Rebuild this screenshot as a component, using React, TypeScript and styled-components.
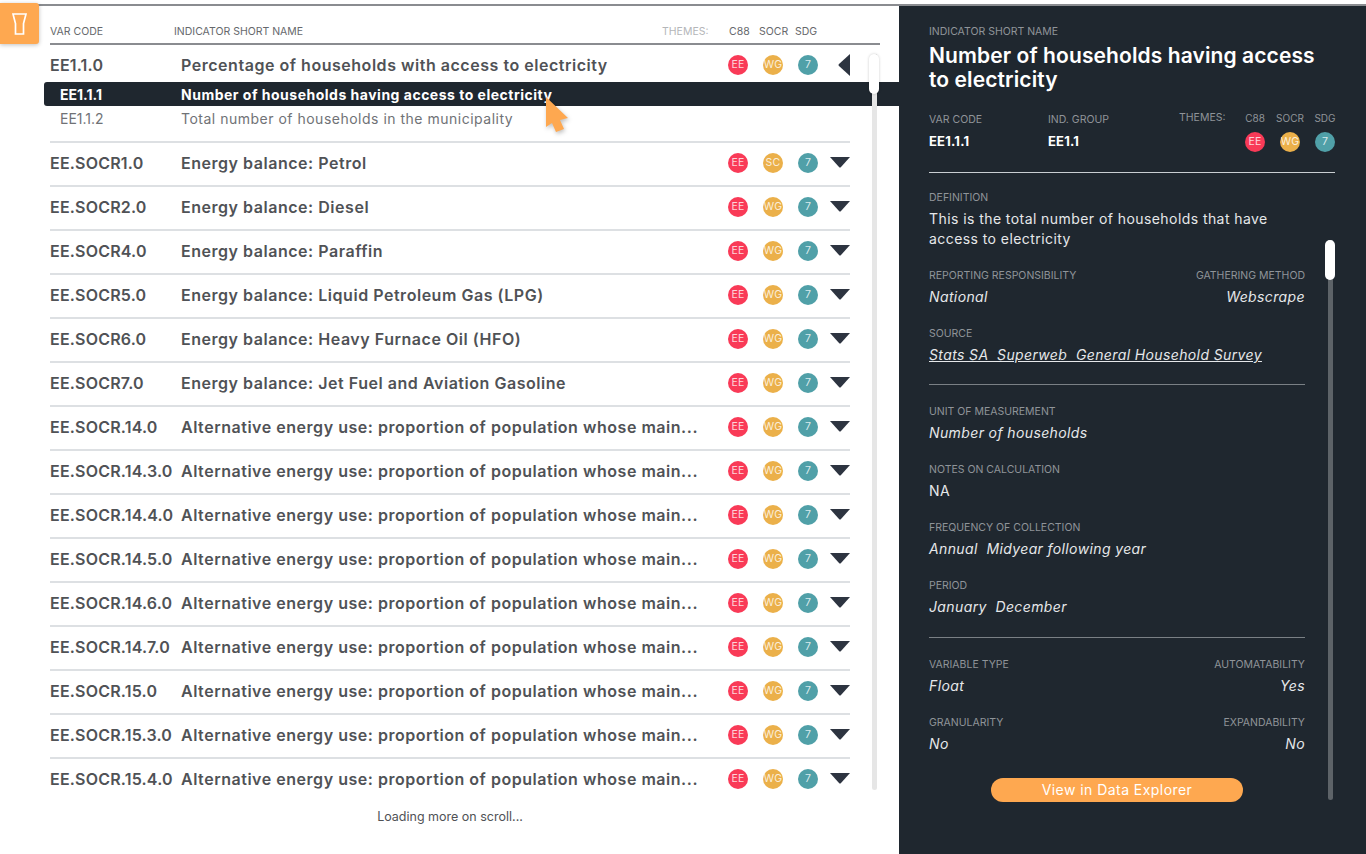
import React from "react";
import styled, { createGlobalStyle } from "styled-components";

const Global = createGlobalStyle`
  html, body { margin: 0; padding: 0; background: #fff; }
  body { font-family: Inter, "Liberation Sans", sans-serif; }
  * { box-sizing: border-box; }
`;

const Page = styled.div`
  position: relative;
  width: 1366px;
  height: 854px;
  padding-top: 4px;
  overflow: hidden;
`;

const Frame = styled.div`
  height: 850px;
  border-top: 2px solid #8a8c90;
  display: flex;
`;

const FilterButton = styled.button`
  position: absolute;
  left: 0;
  top: 3px;
  width: 39px;
  height: 41px;
  border: 0;
  padding: 0;
  border-radius: 0 3px 3px 0;
  background: #fea850;
  box-shadow: 0 1px 4px rgba(0, 0, 0, 0.25);
  display: flex;
  align-items: center;
  justify-content: center;
`;

const Left = styled.section`
  position: relative;
  width: 899px;
  flex: none;
  padding: 19px 0 0 50px;
`;

const HeadRow = styled.div`
  width: 830px;
  height: 20px;
  border-bottom: 2px solid #8a8c90;
  display: grid;
  grid-template-columns: 124px 488px 67px 30px 36px 1fr;
  align-items: start;
`;

const HeadCell = styled.span<{ $muted?: boolean }>`
  font-size: 10.5px;
  line-height: 14px;
  color: ${(p) => (p.$muted ? "#b4b6b9" : "#66686c")};
  white-space: nowrap;
`;

const List = styled.div`
  width: 800px;
`;

const Row = styled.div`
  height: 44px;
  border-bottom: 2px solid #dde0e3;
  display: flex;
  align-items: flex-start;
  padding-top: 10px;
`;

const OpenGroup = styled.div`
  height: 98px;
  border-bottom: 2px solid #dde0e3;
`;

const OpenHead = styled.div`
  height: 37px;
  display: flex;
  align-items: flex-start;
  padding-top: 10px;
`;

const Code = styled.span`
  width: 131px;
  flex: none;
  font-size: 16px;
  line-height: 20px;
  font-weight: 600;
  color: #505256;
  white-space: nowrap;
  letter-spacing: 0.2px;
`;

const Name = styled.span`
  width: 517px;
  flex: none;
  font-size: 16px;
  line-height: 20px;
  font-weight: 600;
  color: #505256;
  white-space: nowrap;
  letter-spacing: 0.53px;
`;

const Badges = styled.div`
  display: flex;
  gap: 15px;
  margin-left: 30px;
  flex: none;
`;

const Badge = styled.span<{ $bg: string }>`
  width: 20px;
  height: 20px;
  border-radius: 50%;
  background: ${(p) => p.$bg};
  color: rgba(255, 255, 255, 0.8);
  font-size: 10.5px;
  line-height: 20px;
  letter-spacing: 0.2px;
  text-align: center;
  flex: none;
`;

const CaretSlot = styled.div`
  width: 20px;
  margin-left: 12px;
  height: 20px;
  flex: none;
  display: flex;
  justify-content: flex-end;
`;

const SelectedRow = styled.div`
  width: 855px;
  margin-left: -6px;
  height: 24px;
  padding-top: 1px;
  border-radius: 3px 0 0 3px;
  background: #1f272f;
  display: flex;
  align-items: center;
  padding-left: 16px;
  color: #fff;
  font-size: 14px;
  font-weight: 700;
`;

const SubCode = styled.span`
  width: 121px;
  flex: none;
`;

const SubName = styled.span`
  white-space: nowrap;
  letter-spacing: 0.5px;
`;

const PlainSub = styled.div`
  height: 24px;
  display: flex;
  align-items: center;
  padding-left: 10px;
  color: #707276;
  font-size: 14px;
  font-weight: 400;
`;

const Track = styled.div<{ $left: number; $top: number; $height: number; $bg: string }>`
  position: absolute;
  left: ${(p) => p.$left}px;
  top: ${(p) => p.$top}px;
  width: 5px;
  height: ${(p) => p.$height}px;
  background: ${(p) => p.$bg};
  border-radius: 0 0 3px 3px;
`;

const Thumb = styled.div<{ $shadow?: boolean }>`
  position: absolute;
  left: -3px;
  top: 0;
  width: 10px;
  height: 40px;
  border-radius: 5px;
  background: #fff;
  box-shadow: ${(p) => (p.$shadow ? "0 0 3px rgba(0,0,0,.2)" : "none")};
`;

const Loading = styled.div`
  width: 800px;
  margin-top: 13px;
  text-align: center;
  font-size: 12.5px;
  line-height: 16px;
  color: #505256;
`;

const Cursor = styled.svg`
  position: absolute;
  left: 543px;
  top: 89px;
  filter: drop-shadow(1px 2px 2px rgba(0, 0, 0, 0.25));
`;

const Right = styled.aside`
  position: relative;
  flex: 1;
  background: #1f272f;
  padding: 19px 30px 0 30px;
  color: #fff;
`;

const Label = styled.div<{ $right?: boolean }>`
  font-size: 10.5px;
  line-height: 14px;
  color: #8f9499;
  white-space: nowrap;
  text-align: ${(p) => (p.$right ? "right" : "left")};
`;

const Title = styled.h1`
  margin: 5px 0 0;
  font-size: 21px;
  line-height: 24px;
  font-weight: 600;
  letter-spacing: 0.1px;
  color: #fff;
`;

const Meta = styled.div`
  margin-top: 21px;
  height: 60px;
  border-bottom: 1px solid #c9ced2;
  width: 406px;
  display: flex;
`;

const MetaField = styled.div<{ $w: number }>`
  width: ${(p) => p.$w}px;
  flex: none;
`;

const MetaValue = styled.div`
  margin-top: 4px;
  font-size: 13px;
  line-height: 20px;
  font-weight: 700;
  letter-spacing: 0.2px;
`;

const ThemeGrid = styled.div`
  display: grid;
  grid-template-columns: 51px 20px 20px 20px;
  grid-template-rows: 14px 20px;
  column-gap: 15px;
  row-gap: 7px;
  margin-top: -2px;
`;

const ThemeHead = styled(Label)`
  font-size: 10px;
  display: flex;
  justify-content: center;
`;

const Body = styled.div`
  width: 376px;
`;

const Section = styled.div<{ $line?: boolean; $top: number; $bottom: number }>`
  padding: ${(p) => p.$top}px 0 ${(p) => p.$bottom}px;
  border-bottom: ${(p) => (p.$line ? "1px solid #7a8085" : "0")};
`;

const Field = styled.div`
  height: 40px;
  margin-top: 18px;
`;

const FieldWide = styled(Field)`
  height: 60px;
`;

const Pair = styled.div`
  display: flex;
  justify-content: space-between;
  margin-top: 18px;
  height: 40px;
`;

const Value = styled.div<{ $right?: boolean; $plain?: boolean }>`
  margin-top: 3px;
  font-size: 14px;
  line-height: 22px;
  font-style: ${(p) => (p.$plain ? "normal" : "italic")};
  color: #e6e8ea;
  text-align: ${(p) => (p.$right ? "right" : "left")};
  letter-spacing: 0.38px;
  white-space: nowrap;
`;

const Linked = styled.a`
  color: #e6e8ea;
  text-decoration: underline;
`;

const Para = styled.p`
  margin: 4px 0 0;
  font-size: 14px;
  line-height: 20px;
  color: #e6e8ea;
  letter-spacing: 0.43px;
`;

const ExplorerButton = styled.button`
  position: absolute;
  left: 92px;
  top: 772px;
  width: 252px;
  height: 24px;
  padding: 0 0 2px;
  border: 0;
  border-radius: 12px;
  background: #fea850;
  color: #fff;
  font-family: inherit;
  font-size: 14px;
  font-weight: 400;
  letter-spacing: 0.45px;
`;

const RED = "#f93a57";
const GOLD = "#ebb04a";
const TEAL = "#50a0a8";

const CaretDown = () => (
  <svg width="20" height="11" viewBox="0 0 20 11" style={{ marginTop: 4 }}>
    <path d="M0 0H20L11 10a1.4 1.4 0 0 1-2 0Z" fill="#2d3440" />
  </svg>
);

const CaretLeft = () => (
  <svg width="12" height="22" viewBox="0 0 12 22" style={{ marginTop: -1 }}>
    <path d="M12 0V22L1 12a1.4 1.4 0 0 1 0-2Z" fill="#2d3440" />
  </svg>
);

const Themes = ({ socr = "WG" }: { socr?: string }) => (
  <Badges>
    <Badge $bg={RED}>EE</Badge>
    <Badge $bg={GOLD}>{socr}</Badge>
    <Badge $bg={TEAL}>7</Badge>
  </Badges>
);

const LONG = "Alternative energy use: proportion of population whose main...";

const rows: [string, string, string?][] = [
  ["EE.SOCR1.0", "Energy balance: Petrol", "SC"],
  ["EE.SOCR2.0", "Energy balance: Diesel"],
  ["EE.SOCR4.0", "Energy balance: Paraffin"],
  ["EE.SOCR5.0", "Energy balance: Liquid Petroleum Gas (LPG)"],
  ["EE.SOCR6.0", "Energy balance: Heavy Furnace Oil (HFO)"],
  ["EE.SOCR7.0", "Energy balance: Jet Fuel and Aviation Gasoline"],
  ["EE.SOCR.14.0", LONG],
  ["EE.SOCR.14.3.0", LONG],
  ["EE.SOCR.14.4.0", LONG],
  ["EE.SOCR.14.5.0", LONG],
  ["EE.SOCR.14.6.0", LONG],
  ["EE.SOCR.14.7.0", LONG],
  ["EE.SOCR.15.0", LONG],
  ["EE.SOCR.15.3.0", LONG],
];

export default function App() {
  return (
    <Page>
      <Global />
      <Frame>
        <Left>
          <HeadRow>
            <HeadCell>VAR CODE</HeadCell>
            <HeadCell>INDICATOR SHORT NAME</HeadCell>
            <HeadCell $muted>THEMES:</HeadCell>
            <HeadCell>C88</HeadCell>
            <HeadCell>SOCR</HeadCell>
            <HeadCell>SDG</HeadCell>
          </HeadRow>
          <List>
            <OpenGroup>
              <OpenHead>
                <Code>EE1.1.0</Code>
                <Name>Percentage of households with access to electricity</Name>
                <Themes />
                <CaretSlot>
                  <CaretLeft />
                </CaretSlot>
              </OpenHead>
              <SelectedRow>
                <SubCode>EE1.1.1</SubCode>
                <SubName>Number of households having access to electricity</SubName>
              </SelectedRow>
              <PlainSub>
                <SubCode>EE1.1.2</SubCode>
                <SubName>Total number of households in the municipality</SubName>
              </PlainSub>
            </OpenGroup>
            {rows.map(([code, name, socr]) => (
              <Row key={code}>
                <Code>{code}</Code>
                <Name>{name}</Name>
                <Themes socr={socr} />
                <CaretSlot>
                  <CaretDown />
                </CaretSlot>
              </Row>
            ))}
            <OpenHead>
              <Code>EE.SOCR.15.4.0</Code>
              <Name>{LONG}</Name>
              <Themes />
              <CaretSlot>
                <CaretDown />
              </CaretSlot>
            </OpenHead>
          </List>
          <Loading>Loading more on scroll...</Loading>
          <Track $left={872} $top={48} $height={736} $bg="#e6e6e6">
            <Thumb $shadow />
          </Track>
          <Cursor width="28" height="40" viewBox="0 0 28 40">
            <path d="M3 2L25 23L17 25L21 34L13 37L9 28L3 32Z" fill="#fea850" />
          </Cursor>
        </Left>
        <Right>
          <Label>INDICATOR SHORT NAME</Label>
          <Title>Number of households having access to electricity</Title>
          <Meta>
            <MetaField $w={119}>
              <Label>VAR CODE</Label>
              <MetaValue>EE1.1.1</MetaValue>
            </MetaField>
            <MetaField $w={131}>
              <Label>IND. GROUP</Label>
              <MetaValue>EE1.1</MetaValue>
            </MetaField>
            <ThemeGrid>
              <Label>THEMES:</Label>
              <ThemeHead>C88</ThemeHead>
              <ThemeHead>SOCR</ThemeHead>
              <ThemeHead>SDG</ThemeHead>
              <span />
              <Badge $bg={RED}>EE</Badge>
              <Badge $bg={GOLD}>WG</Badge>
              <Badge $bg={TEAL}>7</Badge>
            </ThemeGrid>
          </Meta>
          <Body>
            <Section $line $top={0} $bottom={17}>
              <FieldWide>
                <Label>DEFINITION</Label>
                <Para>This is the total number of households that have access to electricity</Para>
              </FieldWide>
              <Pair>
                <div>
                  <Label>REPORTING RESPONSIBILITY</Label>
                  <Value>National</Value>
                </div>
                <div>
                  <Label $right>GATHERING METHOD</Label>
                  <Value $right>Webscrape</Value>
                </div>
              </Pair>
              <Field>
                <Label>SOURCE</Label>
                <Value>
                  <Linked>Stats SA&nbsp; Superweb&nbsp; General Household Survey</Linked>
                </Value>
              </Field>
            </Section>
            <Section $line $top={2} $bottom={18}>
              <Field>
                <Label>UNIT OF MEASUREMENT</Label>
                <Value>Number of households</Value>
              </Field>
              <Field>
                <Label>NOTES ON CALCULATION</Label>
                <Value $plain>NA</Value>
              </Field>
              <Field>
                <Label>FREQUENCY OF COLLECTION</Label>
                <Value>Annual&nbsp; Midyear following year</Value>
              </Field>
              <Field>
                <Label>PERIOD</Label>
                <Value>January&nbsp; December</Value>
              </Field>
            </Section>
            <Section $top={2} $bottom={0}>
              <Pair>
                <div>
                  <Label>VARIABLE TYPE</Label>
                  <Value>Float</Value>
                </div>
                <div>
                  <Label $right>AUTOMATABILITY</Label>
                  <Value $right>Yes</Value>
                </div>
              </Pair>
              <Pair>
                <div>
                  <Label>GRANULARITY</Label>
                  <Value>No</Value>
                </div>
                <div>
                  <Label $right>EXPANDABILITY</Label>
                  <Value $right>No</Value>
                </div>
              </Pair>
            </Section>
          </Body>
          <ExplorerButton>View in Data Explorer</ExplorerButton>
          <Track $left={429} $top={234} $height={560} $bg="#5d6368">
            <Thumb />
          </Track>
        </Right>
      </Frame>
      <FilterButton aria-label="Filter">
        <svg width="15" height="22" viewBox="0 0 15 22" fill="none">
          <path d="M1 1H14L11.5 10.5V21H3.5V10.5Z" stroke="#fff" strokeWidth="1.7" />
        </svg>
      </FilterButton>
    </Page>
  );
}
